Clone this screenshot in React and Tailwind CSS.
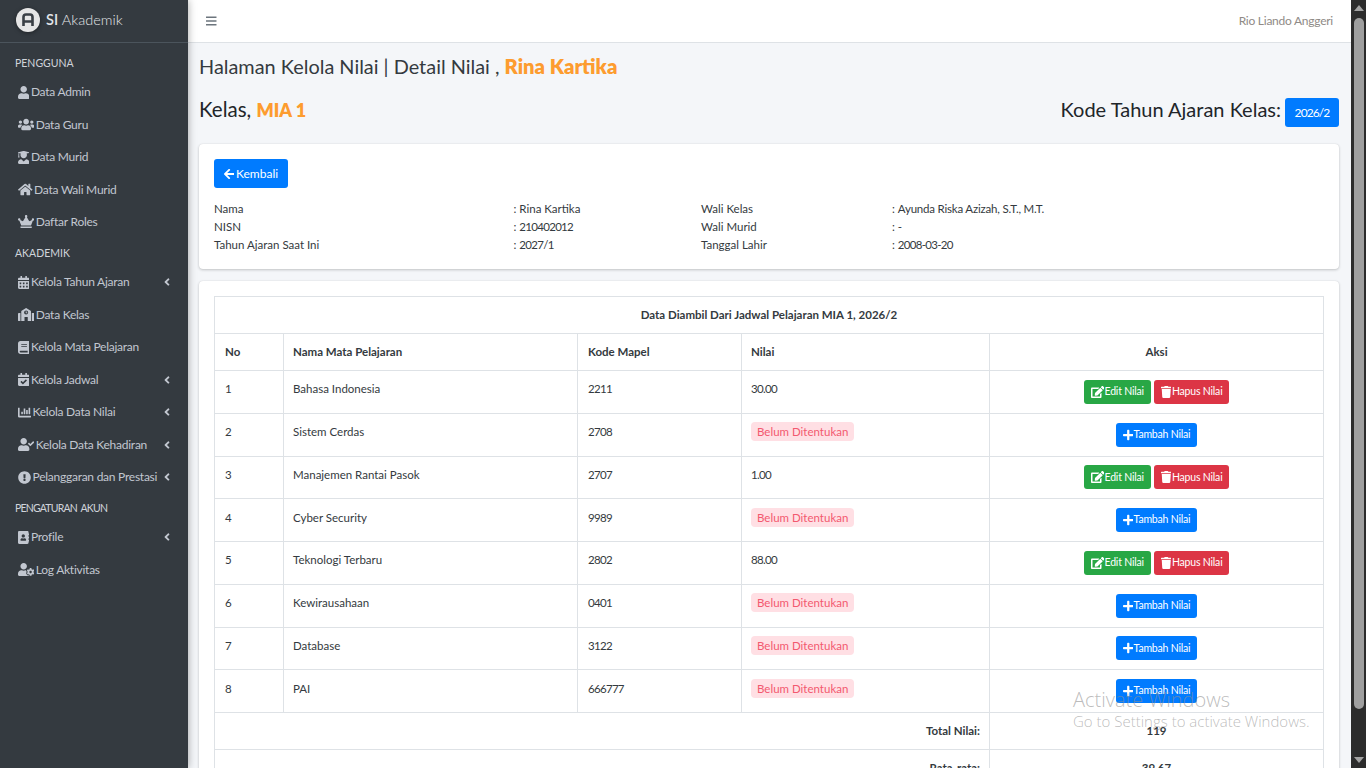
import React from "react";
import { FaUser, FaUsers, FaUserGraduate, FaHome, FaCrown, FaCalendarAlt, FaSchool, FaBook, FaCalendarCheck, FaChartBar, FaUserCheck, FaExclamationCircle, FaAddressBook, FaUserCog, FaArrowLeft, FaEdit, FaTrash, FaPlus, FaBars, FaAngleLeft } from "react-icons/fa";

const W448 = "w-[11.4px]";
const W512 = "w-[13px]";
const W576 = "w-[14.6px]";
const W640 = "w-[16.25px]";

const Item = ({ icon: Icon, label, caret, w }) => (
  <div className="flex items-center pl-[18px] pr-[18px] h-[32.45px] text-[12px] tracking-[-0.25px] text-[#c2c7d0] gap-[1.5px]">
    <Icon className={`h-[13px] shrink-0 text-[#c2c7d0] ${w}`} />
    <span className="whitespace-nowrap">{label}</span>
    {caret && <FaAngleLeft className="ml-auto h-[12px] w-[6px] shrink-0" />}
  </div>
);

const Section = ({ children, className = "" }) => (
  <div className={`pl-[15px] text-[10.5px] leading-[14px] text-[#d0d4db] ${className}`}>{children}</div>
);

const Num = ({ children }) => <span className="tracking-[-0.7px]">{children}</span>;

const rows = [
  ["1", "Bahasa Indonesia", "2211", "30.00"],
  ["2", "Sistem Cerdas", "2708", null],
  ["3", "Manajemen Rantai Pasok", "2707", "1.00"],
  ["4", "Cyber Security", "9989", null],
  ["5", "Teknologi Terbaru", "2802", "88.00"],
  ["6", "Kewirausahaan", "0401", null],
  ["7", "Database", "3122", null],
  ["8", "PAI", "666777", null],
];

const Info = ({ a, b, c, d }) => (
  <div className="flex h-[18px] items-center">
    <div className="w-[299.5px]">{a}</div>
    <div className="w-[187.5px]">: {b}</div>
    <div className="w-[191px]">{c}</div>
    <div>: {d}</div>
  </div>
);

const Btn = ({ color, icon: Icon, w, children }) => (
  <span className={`inline-flex items-center h-[24px] px-[7px] gap-[0.5px] rounded-[3px] text-[10.5px] tracking-[-0.2px] text-white ${color}`}>
    <Icon className={`h-[12px] ${w}`} />
    {children}
  </span>
);

const cell = "border border-[#dee2e6] px-[9px] align-middle";
const cardShadow = "shadow-[0_0_1px_rgba(0,0,0,0.13),0_1px_3px_rgba(0,0,0,0.2)]";

export default function App() {
  return (
    <div className="flex h-screen w-full overflow-hidden bg-[#f4f6f9] text-[#212529] font-['Lato','Liberation_Sans',sans-serif] relative">
      <aside className="w-[188px] shrink-0 bg-[#343a40] shadow-[0_0_8px_rgba(0,0,0,0.35)] z-10">
        <div className="h-[43px] flex items-start pt-[8px] pl-[16px] gap-[6px] border-b border-[#4b545c]">
          <svg width="24" height="24" viewBox="0 0 24 24" className="drop-shadow-[0_1px_2px_rgba(0,0,0,0.4)]">
            <circle cx="12" cy="12" r="12" fill="#e6e6e6" />
            <path d="M7.5 18V9a2.5 2.5 0 0 1 2.5-2.5h4A2.5 2.5 0 0 1 16.5 9v9M7.5 13.5h9" fill="none" stroke="#3a3f45" strokeWidth="2.6" />
          </svg>
          <span className="text-[14.5px] leading-[24px] text-[#e3e5e8]"><span className="font-semibold">SI</span> <span className="font-light">Akademik</span></span>
        </div>
        <Section className="mt-[13px]">PENGGUNA</Section>
        <div className="mt-[6px]">
          <Item icon={FaUser} w={W448} label="Data Admin" />
          <Item icon={FaUsers} w={W640} label="Data Guru" />
          <Item icon={FaUserGraduate} w={W448} label="Data Murid" />
          <Item icon={FaHome} w={W576} label="Data Wali Murid" />
          <Item icon={FaCrown} w={W640} label="Daftar Roles" />
        </div>
        <Section className="mt-[8px]">AKADEMIK</Section>
        <div className="mt-[6px]">
          <Item icon={FaCalendarAlt} w={W448} label="Kelola Tahun Ajaran" caret />
          <Item icon={FaSchool} w={W640} label="Data Kelas" />
          <Item icon={FaBook} w={W448} label="Kelola Mata Pelajaran" />
          <Item icon={FaCalendarCheck} w={W448} label="Kelola Jadwal" caret />
          <Item icon={FaChartBar} w={W512} label="Kelola Data Nilai" caret />
          <Item icon={FaUserCheck} w={W640} label="Kelola Data Kehadiran" caret />
          <Item icon={FaExclamationCircle} w={W512} label="Pelanggaran dan Prestasi" caret />
        </div>
        <Section className="mt-[8px] tracking-[-0.8px] [word-spacing:2px]">PENGATURAN AKUN</Section>
        <div className="mt-[6px]">
          <Item icon={FaAddressBook} w={W448} label="Profile" caret />
          <Item icon={FaUserCog} w={W640} label="Log Aktivitas" />
        </div>
      </aside>

      <div className="flex-1 min-w-0 flex flex-col">
        <header className="h-[43px] shrink-0 bg-white border-b border-[#dee2e6] flex items-center justify-between pl-[18px] pr-[18px]">
          <FaBars className="h-[12px] w-[10.5px] text-[#6c757d]" />
          <span className="text-[12px] tracking-[-0.25px] text-[#8f8a86]">Rio Liando Anggeri</span>
        </header>
        <main className="pl-[11px] pr-[12px] flex-1 min-h-0">
          <h1 className="mt-[10px] h-[27px] text-[19.9px] leading-[27px] text-[#343a40] whitespace-nowrap">
            Halaman Kelola Nilai | Detail Nilai , <span className="font-extrabold text-[20.2px] text-[#fd9c2f]">Rina Kartika</span>
          </h1>
          <div className="mt-[14px] flex items-start justify-between h-[34px]">
            <div className="text-[20.5px] leading-[30px]">Kelas, <span className="font-extrabold text-[18px] text-[#fd9c2f]">MIA 1</span></div>
            <div className="flex items-start gap-[4px]">
              <span className="text-[20px] leading-[30px]">Kode Tahun Ajaran Kelas:</span>
              <span className="mt-[4px] h-[29px] w-[54px] flex items-center justify-center rounded-[3px] bg-[#007bff] text-white text-[12px] tracking-[-0.9px]">2026/2</span>
            </div>
          </div>
          <section className={`mt-[16px] h-[125px] bg-white rounded-[4px] ${cardShadow} px-[15px] pt-[15px] text-[11.5px] text-[#343a40]`}>
            <span className="inline-flex items-center h-[29px] px-[9.5px] gap-[2px] rounded-[3px] bg-[#007bff] text-white text-[12px]">
              <FaArrowLeft className="h-[12px] w-[10.5px]" />Kembali
            </span>
            <div className="mt-[12px]">
              <Info a="Nama" b="Rina Kartika" c="Wali Kelas" d={<span className="tracking-[-0.2px]">Ayunda Riska Azizah, S.T., M.T.</span>} />
              <Info a="NISN" b={<Num>210402012</Num>} c="Wali Murid" d="-" />
              <Info a="Tahun Ajaran Saat Ini" b={<Num>2027/1</Num>} c="Tanggal Lahir" d={<Num>2008-03-20</Num>} />
            </div>
          </section>
          <section className={`mt-[12px] bg-white rounded-[4px] ${cardShadow} p-[15px] text-[11.5px] text-[#343a40]`}>
            <table className="w-[1109px] border-collapse table-fixed">
              <colgroup>
                <col className="w-[69px]" />
                <col className="w-[294px]" />
                <col className="w-[164px]" />
                <col className="w-[248px]" />
                <col className="w-[334px]" />
              </colgroup>
              <thead>
                <tr className="h-[37px]">
                  <th colSpan={5} className={`${cell} font-bold text-center`}>Data Diambil Dari Jadwal Pelajaran MIA 1, 2026/2</th>
                </tr>
                <tr className="h-[37px] font-bold">
                  <th className={`${cell} pl-[10px] text-left`}>No</th>
                  <th className={`${cell} text-left`}>Nama Mata Pelajaran</th>
                  <th className={`${cell} pl-[10px] text-left`}>Kode Mapel</th>
                  <th className={`${cell} text-left`}>Nilai</th>
                  <th className={`${cell} text-center`}>Aksi</th>
                </tr>
              </thead>
              <tbody>
                {rows.map(([n, name, kode, nilai]) => (
                  <tr key={n} className="h-[42.75px]">
                    <td className={`${cell} pl-[10px] pb-[6px]`}>{n}</td>
                    <td className={`${cell} pb-[6px]`}>{name}</td>
                    <td className={`${cell} pl-[10px] pb-[6px]`}><Num>{kode}</Num></td>
                    <td className={`${cell} pb-[6px]`}>
                      {nilai ? <Num>{nilai}</Num> : <span className="inline-block px-[6px] leading-[19px] rounded-[4px] bg-[#ffdfe4] text-[#f3596f]">Belum Ditentukan</span>}
                    </td>
                    <td className={`${cell} text-center`}>
                      {nilai ? (
                        <span className="inline-flex gap-[3px]">
                          <Btn color="bg-[#28a745]" icon={FaEdit} w="w-[13.5px]">Edit Nilai</Btn>
                          <Btn color="bg-[#dc3545]" icon={FaTrash} w="w-[10.5px]">Hapus Nilai</Btn>
                        </span>
                      ) : (
                        <Btn color="bg-[#007bff]" icon={FaPlus} w="w-[10.5px]">Tambah Nilai</Btn>
                      )}
                    </td>
                  </tr>
                ))}
                <tr className="h-[37px] font-bold">
                  <td colSpan={4} className={`${cell} text-right`}>Total Nilai:</td>
                  <td className={`${cell} text-center`}>119</td>
                </tr>
                <tr className="h-[37px] font-bold">
                  <td colSpan={4} className={`${cell} text-right`}>Rata-rata:</td>
                  <td className={`${cell} text-center`}>39.67</td>
                </tr>
              </tbody>
            </table>
          </section>
        </main>
      </div>

      <div className="w-[15px] shrink-0 bg-[#2c2c2c] flex flex-col items-center pl-[3px] pr-[2px] z-10">
        <svg width="10" height="6" viewBox="0 0 10 6" className="mt-[5px]"><polygon points="5,0 10,6 0,6" fill="#a3a3a3" /></svg>
        <div className="w-[10px] h-[691px] rounded-[5px] bg-[#9f9f9f] mt-[7px]" />
        <svg width="10" height="6" viewBox="0 0 10 6" className="mt-auto mb-[5px]"><polygon points="0,0 10,0 5,6" fill="#a3a3a3" /></svg>
      </div>

      <div className="absolute left-[1073px] top-[688px] z-20 pointer-events-none text-[#8f8f8f]/60 font-['Open_Sans',sans-serif] font-light whitespace-nowrap">
        <div className="text-[20px] leading-[24px]">Activate Windows</div>
        <div className="text-[15px] leading-[20px] mt-[-1px]">Go to Settings to activate Windows.</div>
      </div>
    </div>
  );
}
